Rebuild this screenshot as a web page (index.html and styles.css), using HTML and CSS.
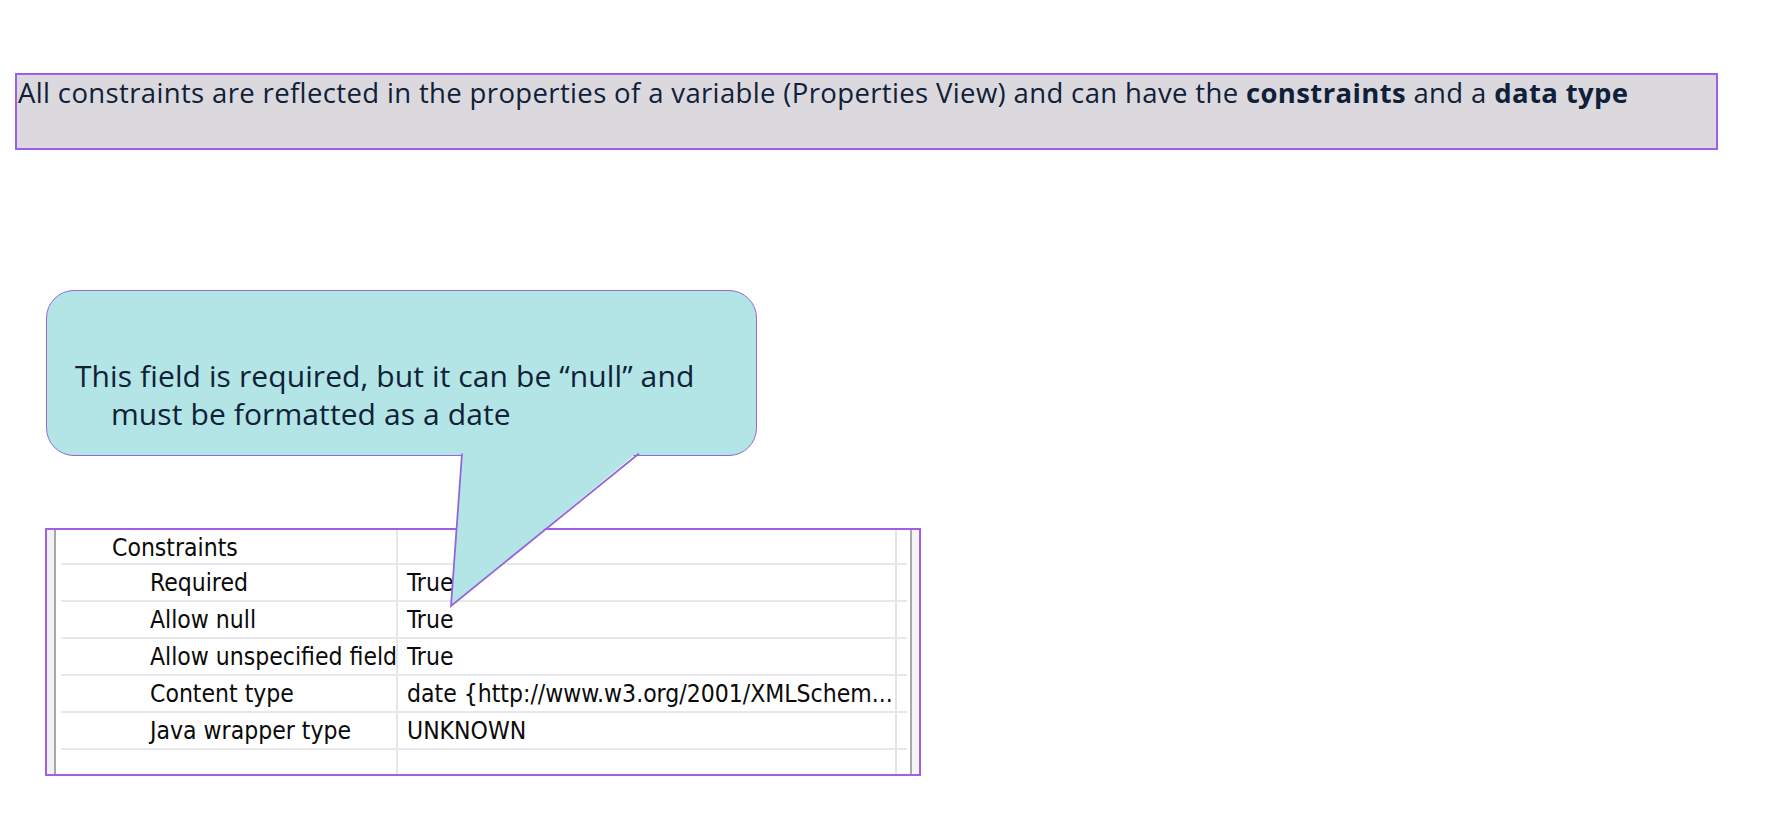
FILE: index.html
```html
<!DOCTYPE html>
<html lang="en">
<head>
<meta charset="utf-8">
<title>Constraints</title>
<link rel="stylesheet" href="styles.css">
</head>
<body>
<div class="page">
  <div class="banner">All constraints are reflected in the properties of a variable (Properties View) and can have the <b>constraints</b> and a <b>data type</b></div>

  <div class="callout">
    <p class="callout-text">This field is required, but it can be “null” and<br>must be formatted as a date</p>
    <svg class="tail" width="711" height="330" viewBox="0 0 711 330">
      <polygon points="417,162 406,317 594,162" fill="#b3e5e6"/>
      <polyline points="417,164.5 406,317 594,164.5" fill="none" stroke="#9466d8" stroke-width="1.8" stroke-linejoin="miter"/>
    </svg>
  </div>

  <div class="props">
    <div class="lstrip"></div>
    <div class="grid">
      <div class="row"><div class="key group">Constraints</div><div class="val"></div><div class="pad"></div></div>
      <div class="row"><div class="key">Required</div><div class="val">True</div><div class="pad"></div></div>
      <div class="row"><div class="key">Allow null</div><div class="val">True</div><div class="pad"></div></div>
      <div class="row"><div class="key">Allow unspecified field</div><div class="val">True</div><div class="pad"></div></div>
      <div class="row"><div class="key">Content type</div><div class="val">date {http://www.w3.org/2001/XMLSchem...</div><div class="pad"></div></div>
      <div class="row"><div class="key">Java wrapper type</div><div class="val">UNKNOWN</div><div class="pad"></div></div>
      <div class="row last"><div class="key"></div><div class="val"></div><div class="pad"></div></div>
    </div>
    <div class="rstrip"></div>
  </div>
</div>
</body>
</html>
```

FILE: styles.css
```css
html, body {
  margin: 0;
  padding: 0;
  background: #ffffff;
}

.page {
  position: relative;
  width: 1770px;
  height: 824px;
  padding-top: 73px;
  box-sizing: border-box;
}

.banner {
  margin-left: 15px;
  width: 1703px;
  height: 77px;
  box-sizing: border-box;
  border: 2px solid #a05ee8;
  background: #dcd9de;
  color: #0f2039;
  font-family: "Open Sans", "Noto Sans", sans-serif;
  font-size: 27.5px;
  line-height: 35px;
  padding: 0 0 0 1px;
  white-space: nowrap;
  letter-spacing: 0.36px;
}

.banner b {
  font-weight: 700;
}

.callout {
  position: relative;
  z-index: 2;
  margin: 140px 0 0 46px;
  width: 711px;
  height: 166px;
  box-sizing: border-box;
  border: 1.8px solid #9466d8;
  border-radius: 28px;
  background: #b3e5e6;
}

.callout-text {
  margin: 0;
  padding: 66px 0 0 64px;
  text-indent: -36px;
  color: #0f2238;
  font-family: "Open Sans", "Noto Sans", sans-serif;
  font-size: 30px;
  line-height: 38px;
  letter-spacing: 0.1px;
}

.tail {
  position: absolute;
  left: -1.8px;
  top: -1.8px;
  overflow: visible;
  pointer-events: none;
}

.props {
  display: flex;
  margin: 72px 0 0 45px;
  width: 876px;
  height: 248px;
  box-sizing: border-box;
  border: 2px solid #a05ee8;
  background: #ffffff;
}

.lstrip {
  width: 7px;
  background: #f1f1f1;
  border-right: 2px solid #a7a7a7;
  margin-right: 5px;
}

.grid {
  flex: 1;
  display: flex;
  flex-direction: column;
}

.row {
  display: flex;
  height: 37px;
  box-sizing: border-box;
  border-bottom: 2px solid #e7e7ec;
  padding-top: 2px;
  font-family: "DejaVu Sans Condensed", "DejaVu Sans", sans-serif;
  font-stretch: condensed;
  font-size: 24.5px;
  line-height: 31px;
  color: #0a0a0a;
}

.row:first-child {
  height: 35px;
}

.row.last {
  flex: 1;
  border-bottom: none;
}

.key {
  width: 337px;
  box-sizing: border-box;
  border-right: 2px solid #e7e7e7;
  margin-top: -2px;
  padding-top: 2px;
  padding-left: 89px;
  white-space: nowrap;
}

.key.group {
  padding-left: 51px;
}

.val {
  width: 499px;
  box-sizing: border-box;
  border-right: 2px solid #e4e4e4;
  margin-top: -2px;
  padding-top: 2px;
  padding-left: 9px;
  white-space: nowrap;
}

.pad {
  flex: 1;
}

.rstrip {
  width: 7px;
  margin-left: 3px;
  border-left: 2px solid #a9a9a9;
  background: #f4f4f4;
}
```
